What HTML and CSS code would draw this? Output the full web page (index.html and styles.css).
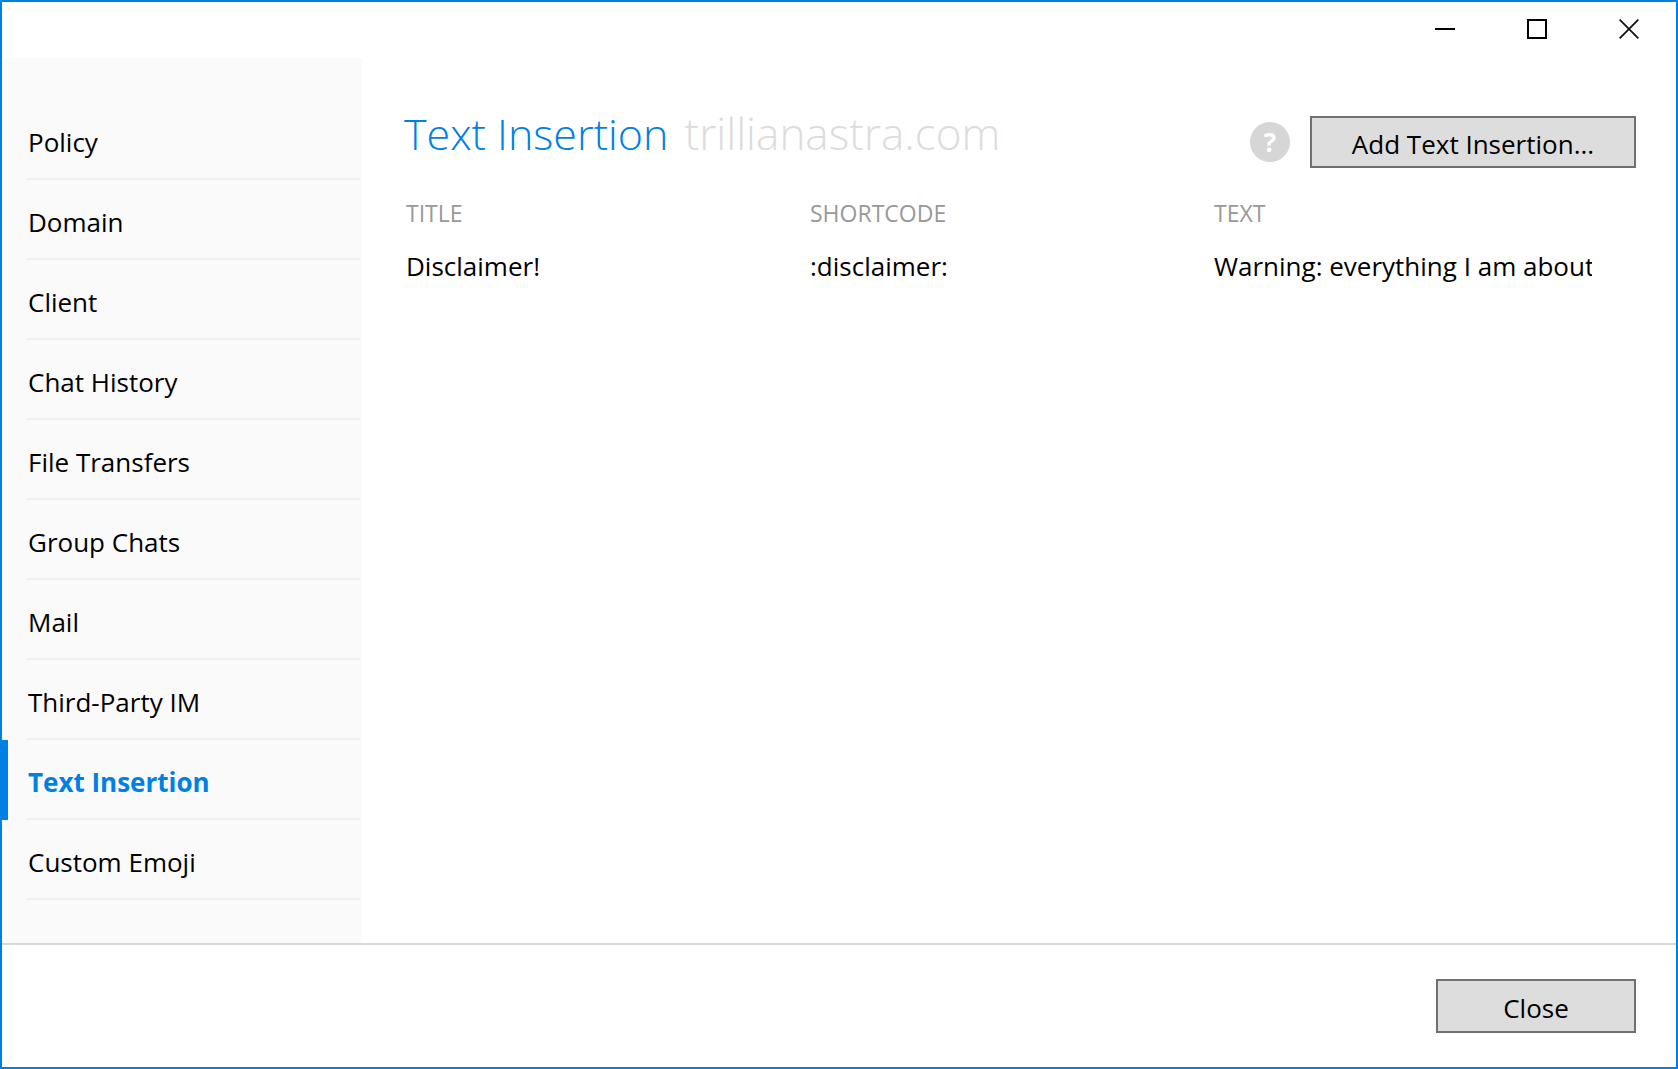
FILE: index.html
```html
<!DOCTYPE html>
<html lang="en">
<head>
<meta charset="utf-8">
<title>Text Insertion</title>
<link rel="stylesheet" href="styles.css">
</head>
<body>
<div class="window">
  <header class="titlebar">
    <button class="caption" type="button" aria-label="Minimize">
      <svg width="20" height="20" viewBox="0 0 20 20"><path d="M0 10h20" stroke="#000" stroke-width="2"/></svg>
    </button>
    <button class="caption" type="button" aria-label="Maximize">
      <svg width="20" height="20" viewBox="0 0 20 20"><path d="M1 1h18v18H1z" fill="none" stroke="#000" stroke-width="2"/></svg>
    </button>
    <button class="caption" type="button" aria-label="Close window">
      <svg width="20" height="20" viewBox="0 0 20 20"><path d="M.7.7l18.6 18.6M19.3.7L.7 19.3" stroke="#111" stroke-width="1.8"/></svg>
    </button>
  </header>
  <div class="body">
    <nav class="sidebar">
      <a class="item" href="#"><span class="label">Policy</span></a>
      <a class="item" href="#"><span class="label">Domain</span></a>
      <a class="item" href="#"><span class="label">Client</span></a>
      <a class="item" href="#"><span class="label">Chat History</span></a>
      <a class="item" href="#"><span class="label">File Transfers</span></a>
      <a class="item" href="#"><span class="label">Group Chats</span></a>
      <a class="item" href="#"><span class="label">Mail</span></a>
      <a class="item" href="#"><span class="label">Third-Party IM</span></a>
      <a class="item active" href="#" aria-current="page"><span class="label">Text Insertion</span></a>
      <a class="item" href="#"><span class="label">Custom Emoji</span></a>
    </nav>
    <main class="content">
      <div class="heading">
        <h1 class="title">Text Insertion</h1>
        <span class="domain">trillianastra.com</span>
        <div class="actions">
          <button class="help" type="button" aria-label="Help">?</button>
          <button class="button add" type="button">Add Text Insertion...</button>
        </div>
      </div>
      <table class="list">
        <thead>
          <tr><th>TITLE</th><th>SHORTCODE</th><th>TEXT</th></tr>
        </thead>
        <tbody>
          <tr>
            <td><div class="cell">Disclaimer!</div></td>
            <td><div class="cell">:disclaimer:</div></td>
            <td><div class="cell">Warning: everything I am about</div></td>
          </tr>
        </tbody>
      </table>
    </main>
  </div>
  <footer class="footer">
    <button class="button close" type="button">Close</button>
  </footer>
</div>
</body>
</html>
```
FILE: styles.css
```css
* {
  box-sizing: border-box;
}

body {
  margin: 0;
  font-family: "Open Sans", "Noto Sans", sans-serif;
  font-size: 26px;
  line-height: 36px;
  color: #000;
  background: #fff;
}

button {
  font: inherit;
  color: inherit;
}

.window {
  display: flex;
  flex-direction: column;
  min-height: 100vh;
  border: 2px solid #0080e3;
}

.titlebar {
  display: flex;
  justify-content: flex-end;
  height: 56px;
  padding-right: 1px;
}

.caption {
  display: flex;
  align-items: center;
  justify-content: center;
  width: 92px;
  height: 54px;
  padding: 0;
  border: 0;
  background: none;
}

.body {
  display: flex;
  flex: 1;
}

.sidebar {
  width: 360px;
  padding: 42px 0;
  background: #fafafa;
}

.item {
  display: block;
  height: 80px;
  padding: 0 2px 0 24px;
  color: #000;
  text-decoration: none;
}

.label {
  display: block;
  height: 80px;
  padding: 24px 0 0 2px;
  border-bottom: 2px solid #f0f0f0;
}

.active {
  padding-left: 18px;
  border-left: 6px solid #0080e3;
  color: #0080e3;
  font-weight: 700;
}

.content {
  flex: 1;
  min-width: 0;
  padding: 48px 40px 0 42px;
}

.heading {
  display: flex;
  align-items: baseline;
  gap: 16px;
  height: 80px;
  line-height: 54px;
  font-size: 44px;
  font-weight: 300;
}

.title {
  margin: 0;
  font-size: 43px;
  font-weight: inherit;
  color: #0080e3;
}

.domain {
  color: #dcdcdc;
}

.actions {
  display: flex;
  align-items: center;
  align-self: flex-start;
  gap: 20px;
  margin: 10px 0 0 auto;
  font-size: 26px;
  font-weight: 400;
  line-height: 36px;
}

.help {
  width: 40px;
  height: 40px;
  padding: 0;
  border: 0;
  border-radius: 50%;
  background: #d6d6d6;
  color: #fff;
  font-weight: 700;
}

.button {
  padding: 4px 0 0;
  border: 2px solid #707070;
  background: #ddd;
}

.add {
  width: 326px;
  height: 52px;
}

.list {
  width: calc(100% - 20px);
  margin-left: 2px;
  table-layout: fixed;
  border-collapse: collapse;
}

.list th,
.list td {
  padding: 0 26px 0 0;
  text-align: left;
}

.list th {
  height: 54px;
  font-size: 23px;
  font-weight: 400;
  color: #999;
}

.cell {
  height: 52px;
  line-height: 52px;
  overflow: hidden;
  white-space: nowrap;
}

.footer {
  display: flex;
  justify-content: flex-end;
  padding: 34px 40px;
  border-top: 2px solid #d9d9d9;
}

.close {
  width: 200px;
  height: 54px;
}
```
